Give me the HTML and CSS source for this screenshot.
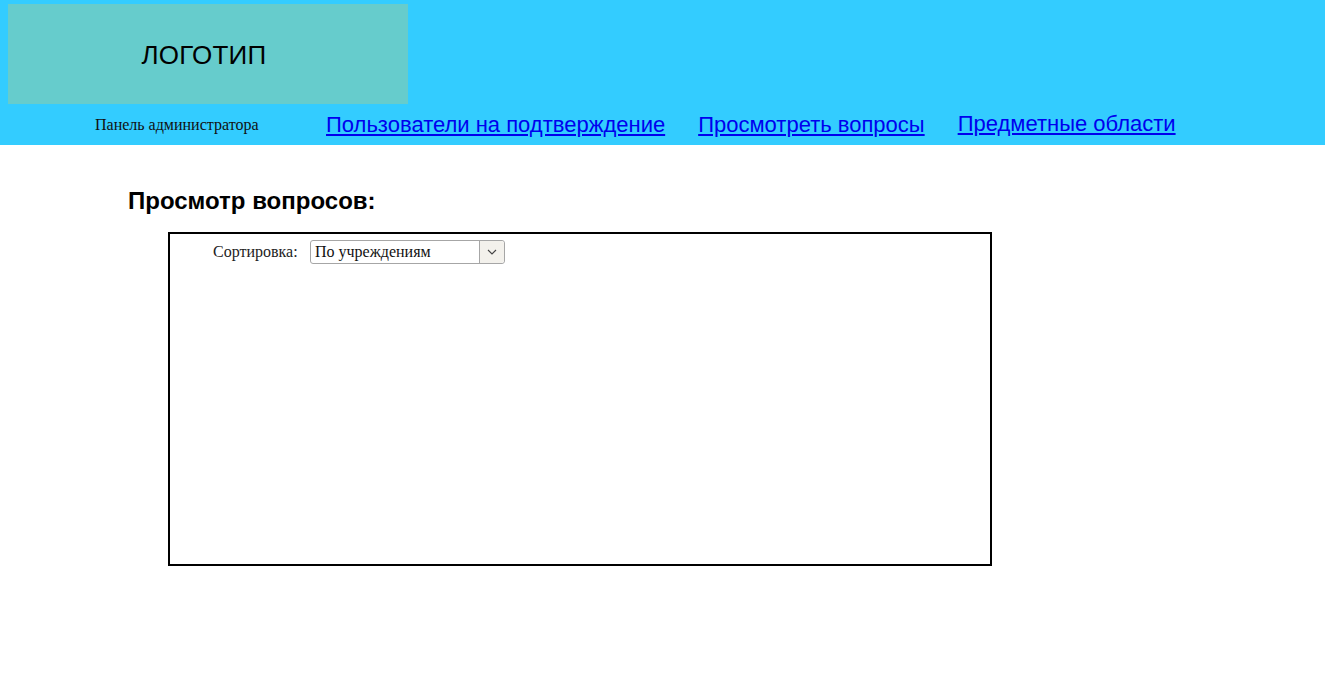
FILE: index.html
```html
<!DOCTYPE html>
<html lang="ru">
<head>
<meta charset="utf-8">
<title>Панель администратора</title>
<link rel="stylesheet" href="styles.css">
</head>
<body>
<header class="header">
  <div class="logo">ЛОГОТИП</div>
  <div class="nav-row">
    <span class="panel">Панель администратора</span>
    <nav class="nav">
      <a href="#" class="nav-link">Пользователи на подтверждение</a>
      <a href="#" class="nav-link">Просмотреть вопросы</a>
      <a href="#" class="nav-link up">Предметные области</a>
    </nav>
  </div>
</header>
<main class="main">
  <h1 class="title">Просмотр вопросов:</h1>
  <section class="box">
    <div class="sort-row">
      <span class="sort-label">Сортировка:</span>
      <div class="select">
        <span class="select-value">По учреждениям</span>
        <span class="select-arrow">
          <svg width="10" height="6" viewBox="0 0 10 6"><path d="M1 1 L5 5 L9 1" fill="none" stroke="#444" stroke-width="1.1"/></svg>
        </span>
      </div>
    </div>
  </section>
</main>
</body>
</html>
```
FILE: styles.css
```css
html, body {
  margin: 0;
  padding: 0;
  background: #fff;
}
body {
  font-family: "Liberation Serif", "Times New Roman", serif;
}
.header {
  background: #33ccff;
  height: 145px;
  padding: 4px 0 0 8px;
  box-sizing: border-box;
}
.logo {
  width: 400px;
  height: 100px;
  background: #66cccc;
  display: flex;
  align-items: center;
  justify-content: center;
  font-family: "Liberation Sans", Arial, sans-serif;
  font-size: 26px;
  letter-spacing: 0.2px;
  color: #000;
  padding: 2px 8px 0 0;
  box-sizing: border-box;
}
.nav-row {
  display: flex;
  align-items: center;
  height: 41px;
}
.panel {
  font-size: 16px;
  color: #111;
  margin-left: 87px;
  width: 231px;
}
.nav {
  display: flex;
  gap: 33px;
  align-items: center;
}
.nav-link {
  font-family: "Liberation Sans", Arial, sans-serif;
  font-size: 22px;
  color: #0000ee;
  text-decoration: underline;
}
.nav-link.up {
  position: relative;
  top: -1px;
}
.main {
  padding: 42px 0 0 128px;
}
.title {
  margin: 0;
  font-family: "Liberation Sans", Arial, sans-serif;
  font-weight: bold;
  font-size: 24px;
  line-height: 28px;
  color: #000;
}
.box {
  margin: 17px 0 0 40px;
  width: 820px;
  height: 330px;
  border: 2px solid #000;
  padding: 0;
}
.sort-row {
  display: flex;
  align-items: center;
  padding: 6px 0 0 43px;
}
.sort-label {
  font-size: 16px;
  color: #222;
  width: 97px;
}
.select {
  display: flex;
  width: 193px;
  height: 22px;
  border: 1px solid #a6a6a6;
  border-radius: 3px;
  background: #fff;
}
.select-value {
  flex: 1;
  font-size: 16px;
  line-height: 22px;
  padding-left: 4px;
  color: #111;
}
.select-arrow {
  width: 24px;
  border-left: 1px solid #a6a6a6;
  background: #f3f1ec;
  display: flex;
  align-items: center;
  justify-content: center;
  border-radius: 0 3px 3px 0;
}
```
